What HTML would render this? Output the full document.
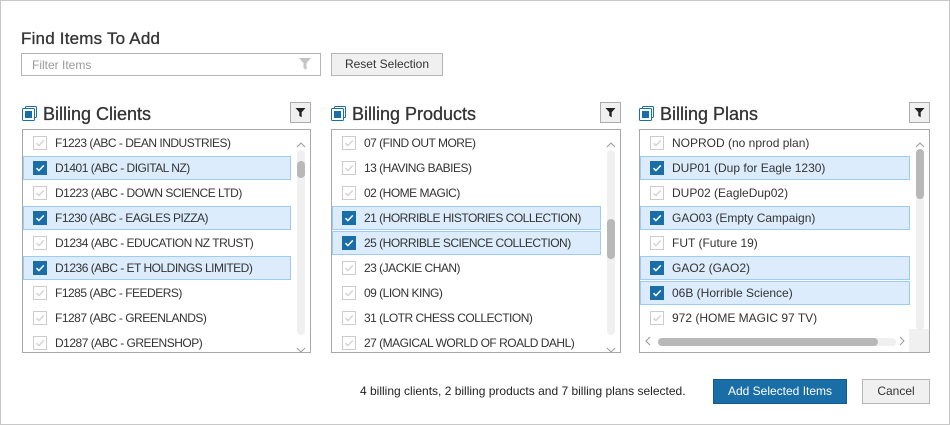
<!DOCTYPE html>
<html><head><style>
*{box-sizing:border-box;margin:0;padding:0}
body{width:950px;height:425px;background:#fff;font-family:"Liberation Sans",sans-serif;color:#333;position:relative;overflow:hidden}
.frame{position:absolute;left:0;top:0;width:950px;height:425px;border:1px solid #c8c8c8}
.abs{position:absolute}
h1{position:absolute;left:21px;top:29px;font-size:17px;font-weight:normal;color:#333;letter-spacing:0.2px;-webkit-text-stroke:0.3px #333}
.input{left:21px;top:53px;width:300px;height:23px;border:1px solid #b5b5b5;font-size:12px;color:#999;padding:4px 10px}
.btn{border:1px solid #b5b5b5;background:#f0f0f0;font-size:12px;color:#333;text-align:center}
.ptitle{font-size:18px;color:#333;-webkit-text-stroke:0.3px #333}
.fbtn{width:21px;height:21px;border:1px solid #adadad;background:#f0f0f0}
.list{border:1px solid #a8a8a8;height:224px;background:#fff;overflow:hidden}
.row{position:absolute;left:0;height:24px;font-size:12px;line-height:24px;padding-left:32px;white-space:nowrap}
.tight .row{letter-spacing:-0.5px}
.row.sel{background:#dcecfc;border:1px solid #9ccbf5;line-height:22px;padding-left:31px}
.cb{position:absolute;left:10px;top:5px;width:14px;height:14px;border:1px solid #ccc;background:#fff}
.sel .cb{background:#1a6ea8;border-color:#1a6ea8;left:9px;top:4px}
.cb svg{position:absolute;left:0px;top:0px}
.track{position:absolute;width:8px;border-radius:4px;background:#f0f0f0}
.thumb{position:absolute;width:8px;border-radius:4px;background:#b8b8b8}
.arr{position:absolute}
</style></head><body>
<div class="frame"></div>
<h1>Find Items To Add</h1>
<div class="abs input">Filter Items</div>
<svg class="abs" style="left:298px;top:57px" width="14" height="15" viewBox="0 0 14 15"><path d="M1 1h12l-4.5 5v7l-3-2V6z" fill="#c4c4c4"/></svg>
<div class="abs btn" style="left:331px;top:53px;width:112px;height:23px;line-height:21px">Reset Selection</div>

<div id="panels"></div>

<div class="abs" style="left:360px;top:384px;font-size:12px;color:#222">4 billing clients, 2 billing products and 7 billing plans selected.</div>
<div class="abs" style="left:713px;top:379px;width:134px;height:25px;background:#1a6ea8;border:1px solid #155a8a;color:#fff;font-size:12px;text-align:center;line-height:23px">Add Selected Items</div>
<div class="abs btn" style="left:862px;top:379px;width:68px;height:25px;line-height:23px">Cancel</div>

<script>
const panels=[
 {x:22,w:289,t:1,title:"Billing Clients",rows:[["F1223 (ABC - DEAN INDUSTRIES)",0],["D1401 (ABC - DIGITAL NZ)",1],["D1223 (ABC - DOWN SCIENCE LTD)",0],["F1230 (ABC - EAGLES PIZZA)",1],["D1234 (ABC - EDUCATION NZ TRUST)",0],["D1236 (ABC - ET HOLDINGS LIMITED)",1],["F1285 (ABC - FEEDERS)",0],["F1287 (ABC - GREENLANDS)",0],["D1287 (ABC - GREENSHOP)",0]],thumb:[160,177],h:false},
 {x:331,w:290,t:1,title:"Billing Products",rows:[["07 (FIND OUT MORE)",0],["13 (HAVING BABIES)",0],["02 (HOME MAGIC)",0],["21 (HORRIBLE HISTORIES COLLECTION)",1],["25 (HORRIBLE SCIENCE COLLECTION)",1],["23 (JACKIE CHAN)",0],["09 (LION KING)",0],["31 (LOTR CHESS COLLECTION)",0],["27 (MAGICAL WORLD OF ROALD DAHL)",0]],thumb:[218,258],h:false},
 {x:639,w:291,t:0,title:"Billing Plans",rows:[["NOPROD (no nprod plan)",0],["DUP01 (Dup for Eagle 1230)",1],["DUP02 (EagleDup02)",0],["GAO03 (Empty Campaign)",1],["FUT (Future 19)",0],["GAO2 (GAO2)",1],["06B (Horrible Science)",1],["972 (HOME MAGIC 97 TV)",0]],thumb:[148,198],h:true}
];
let html="";
const chk='<svg width="12" height="12" viewBox="0 0 12 12"><path d="M2.5 6.2l2.4 2.4L9.8 3.4" fill="none" stroke="COL" stroke-width="1.5"/></svg>';
const up='<svg width="10" height="6" viewBox="0 0 10 6"><path d="M1 5l4-4 4 4" fill="none" stroke="#999" stroke-width="1"/></svg>';
const dn='<svg width="10" height="6" viewBox="0 0 10 6"><path d="M1 1l4 4 4-4" fill="none" stroke="#999" stroke-width="1"/></svg>';
for(const p of panels){
 html+=`<svg class="abs" style="left:${p.x}px;top:106px" width="16" height="16" viewBox="0 0 16 16"><rect x="3.5" y="0.5" width="11" height="11" rx="1" fill="#fff" stroke="#1a6ea8"/><rect x="0.5" y="2.5" width="12" height="12" rx="1" fill="#fff" stroke="#1a6ea8"/><rect x="3" y="5" width="7" height="7" fill="#1a6ea8"/></svg>`;
 html+=`<div class="abs ptitle" style="left:${p.x+21}px;top:104px">${p.title}</div>`;
 html+=`<div class="abs fbtn" style="left:${p.x+p.w-21}px;top:102px"><svg width="19" height="19" viewBox="0 0 19 19"><path d="M4.5 5h10l-3.8 4.2v5l-2.4-1.3V9.2z" fill="#222"/></svg></div>`;
 html+=`<div class="abs list${p.t?' tight':''}" style="left:${p.x}px;top:129px;width:${p.w}px">`;
 p.rows.forEach((r,i)=>{
  const t=1+i*25, s=r[1];
  html+=`<div class="row${s?' sel':''}" style="top:${t}px;width:${p.w-21}px"><div class="cb">${chk.replace('COL',s?'#fff':'#d4d4d4')}</div>${r[0]}</div>`;
 });
 const tx=p.w-15;
 const tb=p.h?200:205;
 html+=`<div class="arr" style="left:${tx-1}px;top:5px">${up}</div>`;
 html+=`<div class="track" style="left:${tx}px;top:20px;height:${tb-20}px"></div>`;
 html+=`<div class="thumb" style="left:${tx}px;top:${p.thumb[0]-129}px;height:${p.thumb[1]-p.thumb[0]}px"></div>`;
 html+=`<div class="arr" style="left:${tx-1}px;top:${tb+5}px">${dn}</div>`;
 if(p.h){
  html+=`<svg class="abs" style="left:5px;top:206px" width="6" height="10" viewBox="0 0 6 10"><path d="M5 1L1 5l4 4" fill="none" stroke="#999"/></svg>`;
  html+=`<div class="abs" style="left:18px;top:208px;width:238px;height:8px;border-radius:4px;background:#f0f0f0"></div>`;
  html+=`<div class="abs" style="left:18px;top:208px;width:220px;height:8px;border-radius:4px;background:#b8b8b8"></div>`;
  html+=`<svg class="abs" style="left:259px;top:206px" width="6" height="10" viewBox="0 0 6 10"><path d="M1 1l4 4-4 4" fill="none" stroke="#999"/></svg>`;
  html+=`<div class="abs" style="left:${p.w-22}px;top:199px;width:20px;height:23px;background:#f0f0f0"></div>`;
 }
 html+=`</div>`;
}
document.getElementById('panels').innerHTML=html;
</script>
</body></html>
